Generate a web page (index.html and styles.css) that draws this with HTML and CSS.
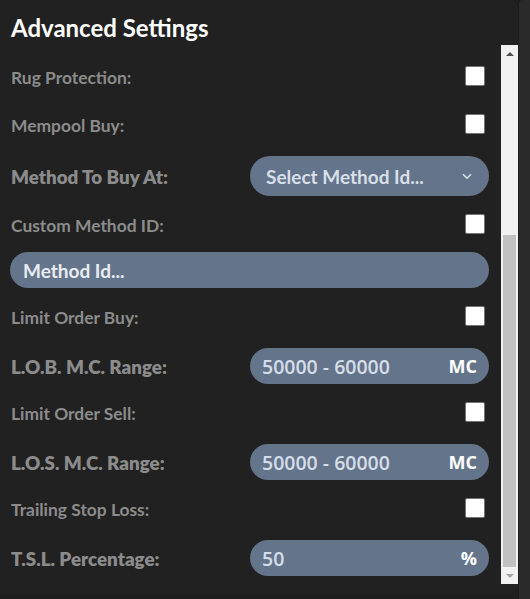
FILE: index.html
```html
<!DOCTYPE html>
<html>
<head>
<meta charset="utf-8">
<link rel="stylesheet" href="styles.css">
</head>
<body>
<div class="frame">
  <div class="panel">
    <h2 class="title">Advanced Settings</h2>
    <div class="scroller">
      <div class="content">
        <div class="row cb-row"><span class="label">Rug Protection:</span><span class="checkbox"></span></div>
        <div class="row cb-row"><span class="label">Mempool Buy:</span><span class="checkbox"></span></div>
        <div class="row in-row select-row"><span class="label big">Method To Buy At:</span>
          <div class="select"><span>Select Method Id...</span>
            <svg class="chev" width="10" height="7" viewBox="0 0 10 7"><path d="M1 1.2 L5 5.2 L9 1.2" fill="none" stroke="#d9e0ea" stroke-width="1.6"/></svg>
          </div>
        </div>
        <div class="row cb-row"><span class="label">Custom Method ID:</span><span class="checkbox"></span></div>
        <div class="row full-row"><div class="input full"><span>Method Id...</span></div></div>
        <div class="row cb-row"><span class="label">Limit Order Buy:</span><span class="checkbox"></span></div>
        <div class="row in-row"><span class="label big">L.O.B. M.C. Range:</span>
          <div class="input"><span class="val">50000 - 60000</span><span class="unit">MC</span></div>
        </div>
        <div class="row cb-row"><span class="label">Limit Order Sell:</span><span class="checkbox"></span></div>
        <div class="row in-row"><span class="label big">L.O.S. M.C. Range:</span>
          <div class="input"><span class="val">50000 - 60000</span><span class="unit">MC</span></div>
        </div>
        <div class="row cb-row"><span class="label">Trailing Stop Loss:</span><span class="checkbox"></span></div>
        <div class="row in-row"><span class="label big">T.S.L. Percentage:</span>
          <div class="input"><span class="val">50</span><span class="unit">%</span></div>
        </div>
      </div>
      <div class="scrollbar">
        <div class="arrow up"></div>
        <div class="track"><div class="thumb"></div></div>
        <div class="arrow down"></div>
      </div>
    </div>
  </div>
  <div class="side"></div>
</div>
</body>
</html>
```
FILE: styles.css
```css
* { box-sizing: border-box; }
html, body { margin: 0; padding: 0; }
body {
  width: 530px;
  height: 599px;
  background: #1e1e1e;
  font-family: Lato, "Open Sans", sans-serif;
  overflow: hidden;
}
.frame {
  display: flex;
  height: 599px;
}
.panel {
  width: 518px;
  height: 594px;
  background: #212121;
  border-radius: 0 8px 8px 0;
  display: flex;
  flex-direction: column;
}
.side {
  flex: 1;
  background: #2a2a2a;
  border-left: 1px solid #1c1c1c;
  border-radius: 4px 0 0 0;
}
.title {
  margin: 0;
  padding: 13px 0 0 11px;
  height: 45px;
  font-size: 24px;
  font-weight: 700;
  color: #ffffff;
  line-height: 30px;
}
.scroller {
  display: flex;
  height: 539px;
  overflow: hidden;
}
.content {
  flex: 1;
  padding: 7px 12px 0 11px;
  display: flex;
  flex-direction: column;
}
.row {
  display: flex;
  align-items: center;
  justify-content: space-between;
}
.cb-row { height: 48px; }
.cb-row .label { padding-top: 3px; }
.in-row { height: 48px; padding: 8px 0 4px; }
.select-row { height: 52px; }
.full-row { height: 44px; padding: 4px 0 4px; margin-left: -1px; }
.label {
  color: #8c8c8c;
  font-size: 17.4px;
  font-weight: 700;
}
.label.big { font-size: 18.8px; font-weight: 800; }
.checkbox {
  width: 20px;
  height: 20px;
  background: #ffffff;
  border: 1px solid #767676;
  border-radius: 2px;
  margin-right: 4px;
}
.select, .input {
  width: 239px;
  height: 36px;
  background: #64748b;
  border-radius: 18px;
  display: flex;
  align-items: center;
  justify-content: space-between;
  color: #dde3eb;
  font-weight: 700;
}
.select {
  height: 40px;
  border-radius: 20px;
  padding: 0 17px 0 16px;
  font-size: 19px;
  color: #d8dfe8;
}
.input {
  padding: 0 12px 0 12px;
  font-size: 19px;
}
.input .val { font-family: "Open Sans", sans-serif; font-weight: 600; font-size: 19.5px; color: #d5dde8; }
.input .unit { color: #ffffff; font-size: 18px; font-family: "Open Sans", sans-serif; font-weight: 700; }
.input.full {
  width: 479px;
  padding-left: 13px;
  color: #e8edf3;
  font-size: 19px;
}
.scrollbar {
  width: 17px;
  background: #f1f1f1;
  display: flex;
  flex-direction: column;
  height: 539px;
}
.arrow {
  height: 17px;
  display: flex;
  align-items: center;
  justify-content: center;
}
.arrow.up::before {
  content: "";
  border-left: 4px solid transparent;
  border-right: 4px solid transparent;
  border-bottom: 4px solid #505050;
}
.arrow.down::before {
  content: "";
  border-left: 4px solid transparent;
  border-right: 4px solid transparent;
  border-top: 4px solid #a3a3a3;
}
.track {
  flex: 1;
  display: flex;
  flex-direction: column;
  justify-content: flex-end;
  padding: 0 2px;
}
.thumb {
  height: 332px;
  background: #c1c1c1;
}
```
